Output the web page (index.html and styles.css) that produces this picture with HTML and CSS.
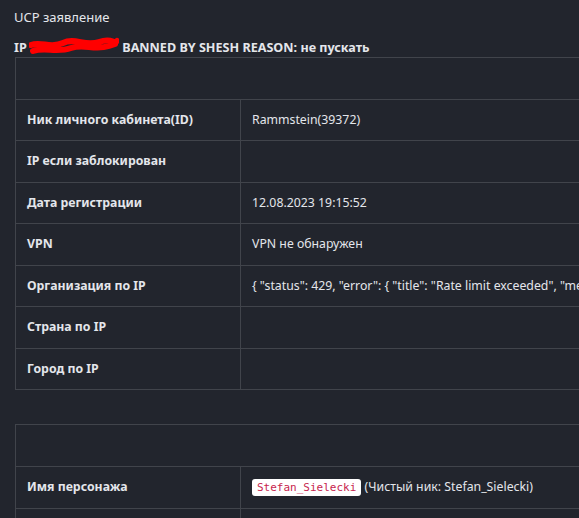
FILE: index.html
```html
<!DOCTYPE html>
<html lang="ru">
  <head>
    <meta charset="UTF-8" />
    <meta name="viewport" content="width=device-width, initial-scale=1.0" />
    <title>UCP заявление</title>
    <link rel="stylesheet" href="styles.css">
  </head>
  <body>
    <div class="page">
      <div class="title">UCP заявление</div>
      <div class="banned">
        IP
        <svg class="scribble" width="90" height="20" viewBox="0 0 90 20">
          <path d="M2 8 C12 4, 22 12, 34 6 S 56 10, 70 5 S 84 8, 88 4" stroke="#ff0000" stroke-width="6" fill="none" stroke-linecap="round" />
          <path d="M4 14 C16 10, 28 16, 42 11 S 64 14, 80 9 L 86 7" stroke="#ff0000" stroke-width="6" fill="none" stroke-linecap="round" />
          <path d="M74 2 L 70 10 L 82 9" stroke="#ff0000" stroke-width="2" fill="none" />
        </svg>
        BANNED BY SHESH REASON: не пускать
      </div>

      <table class="info">
        <colgroup>
          <col class="label-col" />
          <col />
        </colgroup>
        <tr>
          <td colspan="2">&nbsp;</td>
        </tr>
        <tr>
          <th>Ник личного кабинета(ID)</th>
          <td>Rammstein(39372)</td>
        </tr>
        <tr>
          <th>IP если заблокирован</th>
          <td></td>
        </tr>
        <tr>
          <th>Дата регистрации</th>
          <td>12.08.2023 19:15:52</td>
        </tr>
        <tr>
          <th>VPN</th>
          <td>VPN не обнаружен</td>
        </tr>
        <tr>
          <th>Организация по IP</th>
          <td>{ "status": 429, "error": { "title": "Rate limit exceeded", "me</td>
        </tr>
        <tr>
          <th>Страна по IP</th>
          <td></td>
        </tr>
        <tr>
          <th>Город по IP</th>
          <td></td>
        </tr>
      </table>

      <table class="info">
        <colgroup>
          <col class="label-col" />
          <col />
        </colgroup>
        <tr>
          <td colspan="2">&nbsp;</td>
        </tr>
        <tr>
          <th>Имя персонажа</th>
          <td><code>Stefan_Sielecki</code> (Чистый ник: Stefan_Sielecki)</td>
        </tr>
        <tr>
          <th>&nbsp;</th>
          <td></td>
        </tr>
      </table>
    </div>
  </body>
</html>
```

FILE: styles.css
```css
*,
*::before,
*::after {
  box-sizing: border-box;
}

html,
body {
  margin: 0;
  padding: 0;
  background-color: #22252d;
  overflow: hidden;
}

body {
  color: #e4e6eb;
  font-family: "Noto Sans", "Open Sans", sans-serif;
  font-size: 13px;
  line-height: 18.5px;
}

.page {
  padding: 8px 0 0 14px;
}

.title {
  margin-bottom: 10px;
}

.banned {
  font-weight: bold;
  font-size: 12.6px;
  white-space: nowrap;
}

.scribble {
  vertical-align: -5px;
  margin: 0 0 0 -1px;
}

.info {
  margin-left: 1px;
  width: 640px;
  border-collapse: collapse;
  table-layout: fixed;
  font-size: 12.3px;
}

.info + .info {
  margin-top: 34px;
}

.label-col {
  width: 225px;
}

.info th,
.info td {
  border: 1px solid #41444b;
  padding: 11px 11px;
  text-align: left;
  vertical-align: top;
  white-space: nowrap;
  overflow: hidden;
}

.info th {
  font-weight: bold;
}

code {
  font-family: "DejaVu Sans Mono", "Liberation Mono", monospace;
  font-size: 11px;
  color: #c7254e;
  background-color: #ffffff;
  border-radius: 3px;
  padding: 2px 5px;
}
```
